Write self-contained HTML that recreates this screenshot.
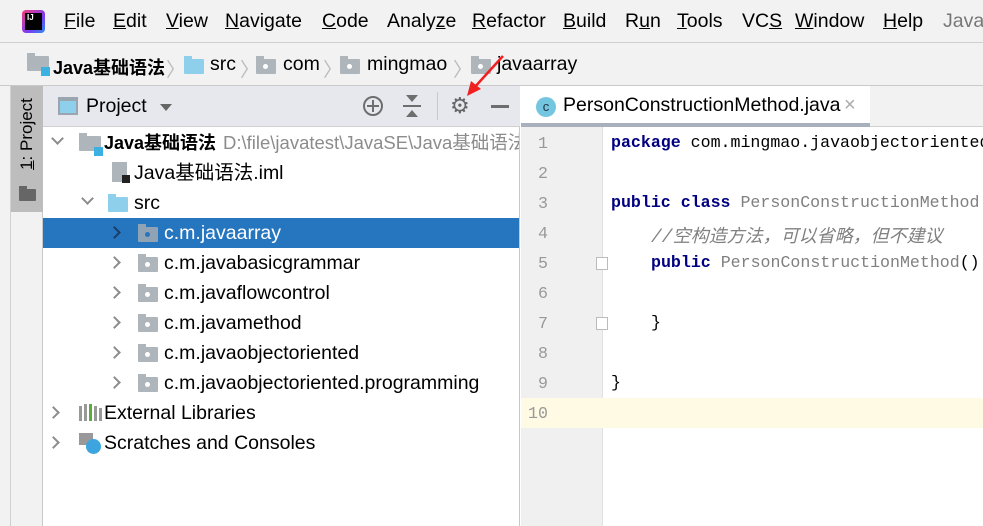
<!DOCTYPE html><html><head><meta charset="utf-8"><style>
*{margin:0;padding:0;box-sizing:border-box}
body{width:983px;height:526px;overflow:hidden;background:#fff;font-family:"Liberation Sans","Noto Sans CJK SC",sans-serif;font-size:19.5px;color:#000;position:relative}
.abs{position:absolute;white-space:nowrap}
.menu{top:0;left:0;width:983px;height:43px;background:#f2f2f2;border-bottom:1px solid #d0d0d0}
.menu span{position:absolute;top:10px}
.bc{top:43px;left:0;width:983px;height:43px;background:#f2f2f2;border-bottom:1px solid #c9c9c9}
.fold{position:absolute;width:20px;height:15px;background:#aeb5bb;border-radius:1px}
.fold:before{content:"";position:absolute;left:0;top:-3px;width:8px;height:4px;background:inherit}
.fold i{position:absolute;left:7px;top:5px;width:5px;height:5px;border-radius:50%;background:#fff}
.strip{top:86px;left:0;width:43px;height:440px;background:#f2f2f2;border-right:1px solid #c9c9c9}
.ph{top:86px;left:43px;width:477px;height:41px;background:#e6e8ee;border-bottom:1px solid #d0d0d0}
.tree{top:127px;left:43px;width:477px;height:399px;background:#fff;border-right:1px solid #c9c9c9;overflow:hidden}
.row{position:absolute;left:0;width:477px;height:30px;line-height:30px}
.chev{position:absolute;top:10px;width:9px;height:9px;border-right:2px solid #8c8c8c;border-bottom:2px solid #8c8c8c}
.r{transform:rotate(-45deg)}.d{transform:rotate(45deg);top:6px}
.tabs{top:86px;left:521px;width:462px;height:41px;background:#f2f2f2;border-bottom:1px solid #d0d0d0}
.gut{top:127px;left:521px;width:82px;height:399px;background:#f0f0f0;border-right:1px solid #e0e0e0}
.ln{position:absolute;left:17px;font-family:"Liberation Mono",monospace;font-size:16.6px;color:#999}
.code{position:absolute;left:611px;font-family:"Liberation Mono","Noto Sans CJK SC",monospace;font-size:16.6px;color:#000;white-space:nowrap}
.kw{color:#000080;font-weight:bold}.cn{color:#808080}
</style></head><body>
<div class="abs menu">
<div style="position:absolute;left:22px;top:10px;width:23px;height:23px;border-radius:4px;background:linear-gradient(135deg,#fc3b7a,#7a3cf0 60%,#2a8cf0)"><div style="position:absolute;left:3px;top:3px;width:17px;height:17px;background:#000;color:#fff;font-size:8px;font-weight:bold;line-height:9px;padding-left:2px">IJ</div></div>
<span style="left:64px"><u>F</u>ile</span><span style="left:113px"><u>E</u>dit</span><span style="left:166px"><u>V</u>iew</span><span style="left:225px"><u>N</u>avigate</span><span style="left:322px"><u>C</u>ode</span><span style="left:387px">Analy<u>z</u>e</span><span style="left:472px"><u>R</u>efactor</span><span style="left:563px"><u>B</u>uild</span><span style="left:625px">R<u>u</u>n</span><span style="left:677px"><u>T</u>ools</span><span style="left:742px">VC<u>S</u></span><span style="left:795px"><u>W</u>indow</span><span style="left:883px"><u>H</u>elp</span><span style="left:943px;color:#777">JavaS</span>
</div>
<div class="abs bc">
<div class="fold" style="left:27px;top:13px;width:22px"></div><div style="position:absolute;left:41px;top:24px;width:9px;height:9px;background:#3cb0e0"></div>
<span class="abs" style="left:53px;top:11px;font-weight:bold;font-size:18px">Java基础语法</span><span class="abs" style="left:166px;top:10px;color:#bbb">〉</span>
<div class="fold" style="left:184px;top:16px;background:#8ed0ec"></div><span class="abs" style="left:210px;top:10px">src</span><span class="abs" style="left:240px;top:10px;color:#bbb">〉</span>
<div class="fold" style="left:256px;top:16px"><i></i></div><span class="abs" style="left:283px;top:10px">com</span><span class="abs" style="left:323px;top:10px;color:#bbb">〉</span>
<div class="fold" style="left:340px;top:16px"><i></i></div><span class="abs" style="left:367px;top:10px">mingmao</span><span class="abs" style="left:453px;top:10px;color:#bbb">〉</span>
<div class="fold" style="left:471px;top:16px"><i></i></div><span class="abs" style="left:497px;top:10px">javaarray</span>
</div>
<div class="abs strip"><div style="position:absolute;left:10px;top:0;width:33px;height:126px;background:#bdbdbd"></div>
<div style="position:absolute;left:10px;top:0;width:1px;height:440px;background:#d0d0d0"></div>
<div class="abs" style="left:-23px;top:38px;transform:rotate(-90deg);font-size:17px;width:100px;text-align:center"><u>1</u>: Project</div>
<div class="fold" style="left:19px;top:103px;width:17px;height:12px;background:#666"></div></div>
<div class="abs ph">
<div style="position:absolute;left:15px;top:11px;width:20px;height:18px;border:2px solid #9aa5b0;background:#8ed0ec;border-top-width:4px"></div>
<span class="abs" style="left:43px;top:9px">Project</span>
<div style="position:absolute;left:117px;top:18px;border:6px solid transparent;border-top:7px solid #666;border-bottom:0"></div>
<div style="position:absolute;left:320px;top:10px;width:20px;height:20px;border:2.5px solid #6e6e6e;border-radius:50%"></div>
<div style="position:absolute;left:324px;top:19px;width:12px;height:2px;background:#6e6e6e"></div><div style="position:absolute;left:329px;top:14px;width:2px;height:12px;background:#6e6e6e"></div>
<div style="position:absolute;left:360px;top:19px;width:18px;height:2px;background:#6e6e6e"></div>
<div style="position:absolute;left:363px;top:9px;border:6px solid transparent;border-top:7px solid #6e6e6e;border-bottom:0"></div>
<div style="position:absolute;left:363px;top:24px;border:6px solid transparent;border-bottom:7px solid #6e6e6e;border-top:0"></div>
<div style="position:absolute;left:394px;top:6px;width:1px;height:28px;background:#c9c9c9"></div>
<div style="position:absolute;left:407px;top:9px;font-size:22px;color:#666;line-height:22px">⚙</div>
<div style="position:absolute;left:448px;top:19px;width:18px;height:3px;background:#6e6e6e"></div>
<svg style="position:absolute;left:420px;top:-35px" width="45" height="50"><line x1="40" y1="5" x2="10" y2="38" stroke="#f02020" stroke-width="2.5"/><polygon points="4,45 8,30 18,38" fill="#f02020"/></svg>
</div>
<div class="abs tree">
<div class="row" style="top:1px"><div class="chev d" style="left:10px"></div><div class="fold" style="left:36px;top:8px;width:22px"></div><div style="position:absolute;left:51px;top:19px;width:9px;height:9px;background:#3cb0e0"></div><span class="abs" style="left:61px;font-weight:bold;font-size:18px">Java基础语法</span><span class="abs" style="left:180px;color:#8c8c8c;font-size:18.5px">D:\file\javatest\JavaSE\Java基础语法</span></div>
<div class="row" style="top:31px"><div style="position:absolute;left:69px;top:4px;width:15px;height:20px;background:#aeb5bb"></div><div style="position:absolute;left:79px;top:17px;width:8px;height:8px;background:#222"></div><span class="abs" style="left:91px">Java基础语法.iml</span></div>
<div class="row" style="top:61px"><div class="chev d" style="left:40px"></div><div class="fold" style="left:65px;top:9px;background:#8ed0ec"></div><span class="abs" style="left:91px">src</span></div>
<div class="row" style="top:91px;background:#2675bf;color:#fff"><div class="chev r" style="left:67px;border-color:#1a3d66"></div><div class="fold" style="left:95px;top:9px;background:#8fa3b5"><i style="background:#2675bf"></i></div><span class="abs" style="left:121px">c.m.javaarray</span></div>
<div class="row" style="top:121px"><div class="chev r" style="left:67px"></div><div class="fold" style="left:95px;top:9px"><i></i></div><span class="abs" style="left:121px">c.m.javabasicgrammar</span></div>
<div class="row" style="top:151px"><div class="chev r" style="left:67px"></div><div class="fold" style="left:95px;top:9px"><i></i></div><span class="abs" style="left:121px">c.m.javaflowcontrol</span></div>
<div class="row" style="top:181px"><div class="chev r" style="left:67px"></div><div class="fold" style="left:95px;top:9px"><i></i></div><span class="abs" style="left:121px">c.m.javamethod</span></div>
<div class="row" style="top:211px"><div class="chev r" style="left:67px"></div><div class="fold" style="left:95px;top:9px"><i></i></div><span class="abs" style="left:121px">c.m.javaobjectoriented</span></div>
<div class="row" style="top:241px"><div class="chev r" style="left:67px"></div><div class="fold" style="left:95px;top:9px"><i></i></div><span class="abs" style="left:121px">c.m.javaobjectoriented.programming</span></div>
<div class="row" style="top:271px"><div class="chev r" style="left:6px"></div>
<div style="position:absolute;left:36px;top:8px;width:3px;height:15px;background:#999"></div><div style="position:absolute;left:41px;top:6px;width:3px;height:17px;background:#999"></div><div style="position:absolute;left:46px;top:6px;width:3px;height:17px;background:#5aad3a"></div><div style="position:absolute;left:51px;top:8px;width:3px;height:15px;background:#999"></div><div style="position:absolute;left:56px;top:10px;width:3px;height:13px;background:#999"></div>
<span class="abs" style="left:61px">External Libraries</span></div>
<div class="row" style="top:301px"><div class="chev r" style="left:6px"></div><div style="position:absolute;left:36px;top:5px;width:14px;height:12px;background:#999"></div><div style="position:absolute;left:43px;top:11px;width:15px;height:15px;border-radius:50%;background:#3ca5e0"></div><span class="abs" style="left:61px">Scratches and Consoles</span></div>
</div>
<div class="abs tabs">
<div style="position:absolute;left:0;top:0;width:349px;height:41px;background:#fff;border-bottom:4px solid #a8b0bd"></div>
<div style="position:absolute;left:15px;top:11px;width:20px;height:20px;border-radius:50%;background:#74c5e0;color:#234;font-size:13px;text-align:center;line-height:20px">c</div>
<span class="abs" style="left:42px;top:8px">PersonConstructionMethod.java</span><span class="abs" style="left:323px;top:8px;color:#aaa;font-size:20px">×</span>
</div>
<div class="abs gut"></div>
<div class="abs" style="left:603px;top:398px;width:380px;height:30px;background:#fffae3"></div>
<div class="abs" style="left:521px;top:398px;width:82px;height:30px;background:#fffae3"></div>
<div class="abs" style="left:521px;top:0">
<div class="ln" style="top:134px">1</div><div class="ln" style="top:164px">2</div><div class="ln" style="top:194px">3</div><div class="ln" style="top:224px">4</div><div class="ln" style="top:254px">5</div><div class="ln" style="top:284px">6</div><div class="ln" style="top:314px">7</div><div class="ln" style="top:344px">8</div><div class="ln" style="top:374px">9</div><div class="ln" style="top:404px;left:7px">10</div>
<div style="position:absolute;left:75px;top:257px;width:12px;height:13px;border:1px solid #bbb;background:#fff"></div>
<div style="position:absolute;left:75px;top:317px;width:12px;height:13px;border:1px solid #bbb;background:#fff"></div>
</div>
<div class="code" style="top:133px"><span class="kw">package</span> com.mingmao.javaobjectoriented</div>
<div class="code" style="top:193px"><span class="kw">public class</span> <span class="cn">PersonConstructionMethod</span></div>
<div class="code" style="top:222px;left:651px;color:#808080;font-style:italic;font-size:18px">//空构造方法，可以省略，但不建议</div>
<div class="code" style="top:253px;left:651px"><span class="kw">public</span> <span class="cn">PersonConstructionMethod</span>()</div>
<div class="code" style="top:313px;left:651px">}</div>
<div class="code" style="top:373px">}</div>
</body></html>
